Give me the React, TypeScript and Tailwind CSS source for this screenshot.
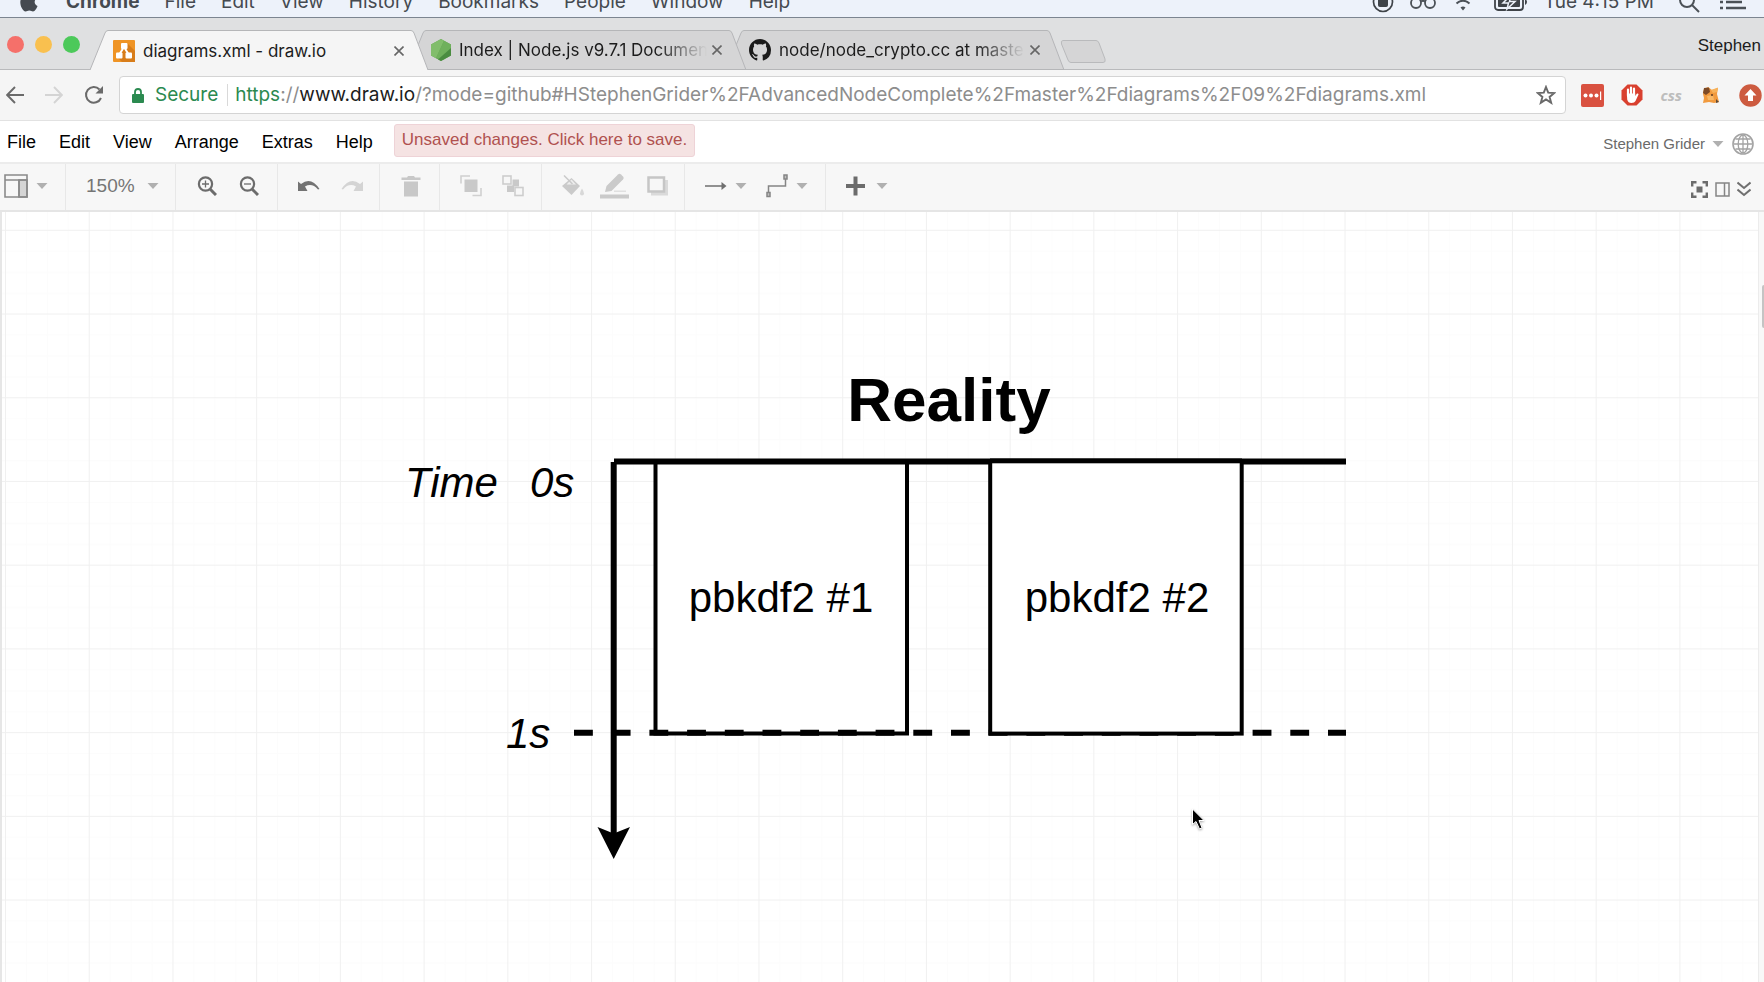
import type { ReactNode } from "react";

const MAC_MENUS = ["File", "Edit", "View", "History", "Bookmarks", "People", "Window", "Help"];
const APP_MENUS = ["File", "Edit", "View", "Arrange", "Extras", "Help"];

function Caret() {
  return (
    <svg className="h-[6px] w-3 shrink-0" viewBox="0 0 12 6" aria-hidden="true">
      <path d="M0.5 0H11.5L6 6Z" fill="#b0b0b0" />
    </svg>
  );
}

/* ---------- macOS menu bar ---------- */

function MacMenuBar() {
  return (
    <div className="flex h-[18px] shrink-0 flex-col justify-end overflow-hidden border-b border-[#7c8590] bg-[#edf2fa]">
      <div className="flex h-[30px] shrink-0 items-center gap-[25px] pl-5 pr-[18px] text-[19px] leading-5 text-[#454a50]">
        <svg className="mr-[3px] h-[22px] w-[18px]" viewBox="0 0 18 22" fill="#454a50" aria-hidden="true">
          <path d="M12.3 0.5C12.4 2.7 10.6 4.7 8.8 4.6C8.600 2.600 10.400 0.600 12.300 0.500ZM9 6C9.900 6 11 5 12.900 5.100C14.600 5.200 16 6 16.800 7.200C13.600 9.300 14.100 13.600 17.500 14.900C16.700 17.300 15 20.300 13 20.400C11.600 20.400 11.100 19.500 9.300 19.500C7.500 19.500 7 20.400 5.600 20.400C3 20.500 0.300 15.500 0.300 11.300C0.300 7.300 2.900 5.100 5.400 5.100C7 5.100 8.200 6 9 6Z" />
        </svg>
        <button className="font-bold">Chrome</button>
        {MAC_MENUS.map((m) => (
          <button key={m}>{m}</button>
        ))}
        <div className="ml-auto flex items-center gap-4">
          <svg className="h-[22px] w-[22px]" viewBox="0 0 22 22" fill="none" stroke="#3f4449" aria-hidden="true">
            <circle cx="11" cy="11" r="9.500" strokeWidth="1.700" />
            <rect x="6.500" y="6.500" width="9" height="9" rx="1" fill="#3f4449" />
          </svg>
          <svg className="h-[22px] w-[26px]" viewBox="0 0 26 22" fill="none" stroke="#4b5157" strokeWidth="1.800" aria-hidden="true">
            <circle cx="6" cy="12" r="5" />
            <circle cx="20" cy="12" r="5" />
            <path d="M11 10.500Q13 9 15 10.500" />
          </svg>
          <svg className="h-[20px] w-[22px]" viewBox="0 0 22 20" fill="none" stroke="#4b5157" strokeWidth="2" aria-hidden="true">
            <path d="M1 7Q11 -2 21 7M4.500 11.500Q11 6 17.500 11.500" />
            <path d="M8.500 15.500Q11 13.500 13.500 15.500L11 18.500Z" fill="#4b5157" stroke="none" />
          </svg>
          <svg className="ml-1 h-[18px] w-[34px]" viewBox="0 0 34 18" aria-hidden="true">
            <rect x="1" y="1" width="28" height="16" rx="3" fill="none" stroke="#3f4449" strokeWidth="1.800" />
            <rect x="4" y="4" width="22" height="10" rx="1" fill="#3f4449" />
            <path d="M17 2L9 10H14.500L13 16L21 8.500H15.500Z" fill="#3f4449" stroke="#edf2fa" strokeWidth="1.500" />
            <path d="M31 6V12Q33 11 33 9Q33 7 31 6Z" fill="#3f4449" />
          </svg>
          <span className="whitespace-nowrap">Tue 4:15 PM</span>
          <svg className="ml-2 h-[22px] w-[22px]" viewBox="0 0 22 22" fill="none" stroke="#4b5157" strokeWidth="2" aria-hidden="true">
            <circle cx="9" cy="9" r="7" />
            <path d="M14 14L21 21" />
          </svg>
          <svg className="ml-1 h-[16px] w-[26px]" viewBox="0 0 26 16" stroke="#4b5157" strokeWidth="2.500" aria-hidden="true">
            <path d="M0 2H3M6 2H22M0 8H3M6 8H22M0 14H3M6 14H26" />
          </svg>
        </div>
      </div>
    </div>
  );
}

/* ---------- Browser tabs ---------- */

function DrawIoIcon() {
  return (
    <svg className="h-[22px] w-[22px] shrink-0" viewBox="0 0 22 22" aria-hidden="true">
      <rect width="22" height="22" rx="1" fill="#ef9425" />
      <path d="M14 3L22 11V22H9L4 17Z" fill="#d87d1a" />
      <path d="M11 7L6 15M11 7L16 15" stroke="#fff" strokeWidth="2" />
      <rect x="8" y="3" width="6.500" height="6" rx="1" fill="#fff" />
      <rect x="3" y="12.500" width="6.500" height="6" rx="1" fill="#fff" />
      <rect x="12.500" y="12.500" width="6.500" height="6" rx="1" fill="#fff" />
    </svg>
  );
}

function NodeIcon() {
  return (
    <svg className="h-[22px] w-[20px] shrink-0" viewBox="0 0 20 22" aria-hidden="true">
      <path d="M10 0L20 5.500V16.500L10 22L0 16.500V5.500Z" fill="#63a553" />
      <path d="M10 0L13 1.700L5 19.200L0 16.500V5.500Z" fill="#81bd6b" />
      <path d="M13 1.700L20 5.500V11L13 20.400L5 19.200Z" fill="#6fb05c" />
      <path d="M20 9V16.500L10 22L7 20.400Z" fill="#4a8c40" />
    </svg>
  );
}

function GithubIcon() {
  return (
    <svg className="h-[22px] w-[22px] shrink-0" viewBox="0 0 16 16" fill="#1b1b1b" aria-hidden="true">
      <path d="M8 0C3.580 0 0 3.580 0 8c0 3.540 2.290 6.530 5.470 7.590.4.070.55-.17.55-.38 0-.19-.01-.82-.01-1.490-2.010.37-2.530-.49-2.690-.94-.09-.23-.48-.94-.82-1.130-.28-.15-.68-.52-.01-.53.63-.01 1.080.58 1.230.82.72 1.210 1.870.87 2.330.66.07-.52.28-.87.51-1.070-1.780-.2-3.640-.89-3.640-3.950 0-.87.31-1.590.82-2.150-.08-.2-.36-1.020.08-2.120 0 0 .67-.21 2.200.82.64-.18 1.320-.27 2-.27s1.360.09 2 .27c1.530-1.040 2.200-.82 2.200-.82.44 1.100.16 1.920.08 2.120.51.56.82 1.270.82 2.150 0 3.070-1.870 3.750-3.650 3.950.29.25.54.73.54 1.480 0 1.070-.01 1.930-.01 2.200 0 .21.15.46.55.38A8.010 8.010 0 0 0 16 8c0-4.420-3.580-8-8-8Z" />
    </svg>
  );
}

function Tab({ title, icon, active, layer }: { title: string; icon: ReactNode; active?: boolean; layer: string }) {
  const fill = active ? "#f5f5f5" : "#d5d5d6";
  return (
    <div className={`relative flex h-10 w-[338px] shrink-0 not-first:-ml-5 ${layer}`}>
      <svg className="h-10 w-[18px] shrink-0" viewBox="0 0 18 40" aria-hidden="true">
        <path d="M0 40L15 3Q16 0.500 18 0.500V40Z" fill={fill} />
        <path d="M0 40L15 3Q16 0.500 18 0.500" fill="none" stroke="#b5b6b8" />
      </svg>
      <div
        className={`flex min-w-0 flex-1 items-center border-t border-[#b5b6b8] pl-[5px] ${
          active ? "bg-[#f5f5f5]" : "border-b bg-[#d5d5d6]"
        }`}
      >
        {icon}
        <button
          className={`ml-2 flex-1 overflow-hidden whitespace-nowrap text-left text-[17px] leading-5 text-[#1c1c1c] ${
            active ? "" : "[mask-image:linear-gradient(to_right,black_80%,transparent)]"
          }`}
        >
          {title}
        </button>
        <button aria-label={`Close ${title}`} className="ml-[2px] mr-1 p-[3px]">
          <svg className="h-[10px] w-[10px]" viewBox="0 0 10 10" stroke="#666" strokeWidth="1.600" aria-hidden="true">
            <path d="M0.500 0.500L9.500 9.500M9.500 0.500L0.500 9.500" />
          </svg>
        </button>
      </div>
      <svg className="h-10 w-[17px] shrink-0" viewBox="0 0 17 40" aria-hidden="true">
        <path d="M0 0.500Q2 0.500 3 3L17 40H0Z" fill={fill} />
        <path d="M0 0.500Q2 0.500 3 3L17 40" fill="none" stroke="#b5b6b8" />
        {!active && <path d="M0 39.500H17" stroke="#b5b6b8" />}
      </svg>
    </div>
  );
}

function TabStrip() {
  return (
    <div className="flex h-[52px] shrink-0 items-end bg-[#dfe0e1] pr-[3px] shadow-[inset_0_-1px_0_#b9babc]">
      <div className="flex w-[90px] shrink-0 gap-[11px] self-center pl-[7px]">
        <button aria-label="Close window" className="h-[17px] w-[17px] rounded-full bg-[#f5706a]" />
        <button aria-label="Minimize window" className="h-[17px] w-[17px] rounded-full bg-[#f9c04f]" />
        <button aria-label="Zoom window" className="h-[17px] w-[17px] rounded-full bg-[#4cc95a]" />
      </div>
      <div className="isolate flex">
        <Tab title="diagrams.xml - draw.io" icon={<DrawIoIcon />} active layer="z-30" />
        <Tab title="Index | Node.js v9.7.1 Documentation" icon={<NodeIcon />} layer="z-20" />
        <Tab title="node/node_crypto.cc at master · nodejs" icon={<GithubIcon />} layer="z-10" />
      </div>
      <button aria-label="New tab" className="-ml-1 mb-[7px]">
        <svg className="h-[23px] w-[47px]" viewBox="0 0 47 23" aria-hidden="true">
          <path d="M3 0.500H36Q38 0.500 39 3L45 19Q46 22.500 43 22.500H11Q9 22.500 8 20L1.500 4Q0.500 0.500 3 0.500Z" fill="#d5d5d6" stroke="#b9babc" />
        </svg>
      </button>
      <button className="mb-[14px] ml-auto font-['Liberation_Sans',Arial,sans-serif] text-[17px] leading-5 text-[#1c1c1c]">
        Stephen
      </button>
    </div>
  );
}

/* ---------- Address bar ---------- */

function AddressBar() {
  return (
    <div className="flex h-[51px] shrink-0 items-center border-b border-[#e2e2e2] bg-[#f5f5f5] pl-[6px] pr-[2px]">
      <button aria-label="Back">
        <svg className="h-[18px] w-[18px]" viewBox="0 0 18 18" fill="none" stroke="#6a6a6a" strokeWidth="1.900" aria-hidden="true">
          <path d="M18 9H1.500M9 1L1.200 9L9 17" />
        </svg>
      </button>
      <button aria-label="Forward" className="ml-[21px]">
        <svg className="h-[18px] w-[18px]" viewBox="0 0 18 18" fill="none" stroke="#d4d4d4" strokeWidth="1.900" aria-hidden="true">
          <path d="M0 9H16.500M9 1L16.800 9L9 17" />
        </svg>
      </button>
      <button aria-label="Reload" className="ml-[21px]">
        <svg className="h-5 w-5" viewBox="0 0 20 20" fill="none" stroke="#6a6a6a" strokeWidth="2" aria-hidden="true">
          <path d="M17 13A7.800 7.800 0 1 1 15.500 4.500" />
          <path d="M19 1V8.500H11.500Z" fill="#6a6a6a" stroke="none" />
        </svg>
      </button>
      <div className="ml-[15px] flex h-[38px] min-w-0 flex-1 items-center rounded-[4px] border border-[#d4d4d4] bg-white pl-3 pr-[9px] text-[19px] leading-6">
        <svg className="h-[15px] w-3 shrink-0" viewBox="0 0 12 15" aria-hidden="true">
          <path d="M3 7V4Q3 1 6 1Q9 1 9 4V7" fill="none" stroke="#2b8a50" strokeWidth="1.800" />
          <rect y="6" width="12" height="9" rx="1" fill="#2b8a50" />
        </svg>
        <span className="ml-[11px] text-[#2b8a50]">Secure</span>
        <span className="ml-[9px] h-[22px] w-px shrink-0 bg-[#d9d9d9]" />
        <div
          role="textbox"
          aria-label="Address"
          contentEditable
          suppressContentEditableWarning
          className="ml-[7px] min-w-0 flex-1 overflow-hidden whitespace-nowrap text-[#8d8d8d] outline-none"
        >
          <span className="text-[#2b8a50]">https</span>://<span className="text-[#1c1c1c]">www.draw.io</span>
          /?mode=github#HStephenGrider%2FAdvancedNodeComplete%2Fmaster%2Fdiagrams%2F09%2Fdiagrams.xml
        </div>
        <button aria-label="Bookmark this page">
          <svg className="h-5 w-5" viewBox="0 0 20 20" fill="none" stroke="#6a6a6a" strokeWidth="1.900" aria-hidden="true">
            <path d="M10 2L12.200 7.700L18.300 8L13.600 11.900L15.200 17.800L10 14.500L4.800 17.800L6.400 11.900L1.700 8L7.800 7.700Z" />
          </svg>
        </button>
      </div>
      <div className="ml-[15px] flex shrink-0 items-center">
        <button aria-label="Password manager">
          <svg className="h-[23px] w-[23px]" viewBox="0 0 23 23" aria-hidden="true">
            <rect width="23" height="23" rx="2" fill="#d95140" />
            <g fill="#fff">
              <circle cx="4.500" cy="11.500" r="2" />
              <circle cx="10" cy="11.500" r="2" />
              <circle cx="15.500" cy="11.500" r="2" />
              <rect x="19" y="7.500" width="1.200" height="8.500" />
            </g>
          </svg>
        </button>
        <button aria-label="Ad blocker" className="ml-[17px]">
          <svg className="h-[22px] w-[22px]" viewBox="0 0 22 22" aria-hidden="true">
            <path d="M6.500 0.500H15.500L21.500 6.500V15.500L15.500 21.500H6.500L0.500 15.500V6.500Z" fill="#d9402f" />
            <path d="M7 12V5.500M10 11V3.500M13 11V4.500" stroke="#fff" strokeWidth="2.200" strokeLinecap="round" />
            <path d="M5.900 9.500H14.200V12L16 9.500Q17.500 9 17.500 10.500L14.500 17Q13.500 19 10.500 19Q7 19 6.200 15.500Z" fill="#fff" />
          </svg>
        </button>
        <button aria-label="CSS extension" className="ml-[17px] font-['Noto_Sans'] text-[15px] font-bold italic leading-5 text-[#bdbdbd]">
          css
        </button>
        <button aria-label="Fox extension" className="ml-5">
          <svg className="h-[18px] w-[18px]" viewBox="0 0 18 18" aria-hidden="true">
            <path d="M2 3L6 1L10 4L16 2L15 8L17 16L12 17L7 16L1 17L2 12L1 8Z" fill="#f19a3e" />
            <path d="M2 2L7 1.500L8 6L4 9L1 7Z" fill="#7d4a26" />
            <path d="M9 4L16 1.500L15 6L11 7Z" fill="#f7b25a" />
            <path d="M5 10L11 9L12 14L6 14Z" fill="#f8b866" />
            <circle cx="10" cy="9" r="1" fill="#5e3a20" />
            <path d="M14 13L17 16L14 17Z" fill="#5e4a3a" />
          </svg>
        </button>
        <button aria-label="Upload extension" className="ml-[19px]">
          <svg className="h-[23px] w-[23px]" viewBox="0 0 23 23" aria-hidden="true">
            <circle cx="11.500" cy="11.500" r="11.200" fill="#cd5b40" />
            <path d="M11.500 5L17.500 11.500H14V17H9V11.500H5.500Z" fill="#fff" />
          </svg>
        </button>
      </div>
    </div>
  );
}

/* ---------- Editor menu bar ---------- */

function AppMenuBar() {
  return (
    <div className="flex h-[43px] shrink-0 items-center border-b-2 border-[#ececec] bg-white pl-[7px] pr-[10px] font-['Liberation_Sans',Arial,sans-serif]">
      <nav className="flex gap-[23px] text-[18px] leading-6 text-black">
        {APP_MENUS.map((m) => (
          <button key={m}>{m}</button>
        ))}
      </nav>
      <button className="ml-[21px] mb-[3px] h-[33px] whitespace-nowrap rounded-[3px] border border-[#eed3d7] bg-[#f5e3e3] px-[7px] text-[17px] leading-5 text-[#b0514f]">
        Unsaved changes. Click here to save.
      </button>
      <button className="ml-auto mt-1 flex items-center gap-[7px] text-[15px] leading-5 text-[#6a6a6a]">
        Stephen Grider
        <Caret />
      </button>
      <button aria-label="Language" className="ml-2 mt-1">
        <svg className="h-[22px] w-[22px]" viewBox="0 0 22 22" fill="none" stroke="#a3a3a3" strokeWidth="1.300" aria-hidden="true">
          <circle cx="11" cy="11" r="10" strokeWidth="1.600" />
          <ellipse cx="11" cy="11" rx="4.800" ry="9" />
          <path d="M11 2V20M2 11H20M3.500 6H18.500M3.500 16H18.500" />
        </svg>
      </button>
    </div>
  );
}

/* ---------- Editor toolbar ---------- */

function Group({ width, last, children }: { width: string; last?: boolean; children: ReactNode }) {
  return (
    <div className={`flex h-full shrink-0 items-center pb-[2px] ${last ? "" : "border-r border-[#e8e8e8]"} ${width}`}>
      {children}
    </div>
  );
}

function Tool({ label, className = "", caret, children }: { label: string; className?: string; caret?: boolean; children: ReactNode }) {
  return (
    <button aria-label={label} className={`flex items-center ${caret ? "gap-2" : ""} ${className}`}>
      {children}
      {caret && <Caret />}
    </button>
  );
}

function Toolbar() {
  return (
    <div className="flex h-12 shrink-0 items-center border-b-2 border-[#e5e5e5] bg-[#f7f7f7] pr-[13px]">
      <Group width="w-[66px]">
        <Tool label="View panels" className="pl-1" caret>
          <svg className="h-6 w-6" viewBox="0 0 24 24" fill="none" stroke="#8a8a8a" strokeWidth="1.600" aria-hidden="true">
            <rect x="15" y="6" width="8" height="17" fill="#d5d5d5" />
            <path d="M1 1H23V23H1ZM1 6H23M15 6V23" />
          </svg>
        </Tool>
      </Group>
      <Group width="w-[110px]">
        <button className="flex items-center gap-3 pl-5 font-['Liberation_Sans',Arial,sans-serif] text-[19px] leading-6 text-[#757575]">
          150%
          <Caret />
        </button>
      </Group>
      <Group width="w-[102px]">
        <Tool label="Zoom in" className="ml-[21px]">
          <svg className="h-5 w-5" viewBox="0 0 20 20" fill="none" stroke="#6c6c6c" aria-hidden="true">
            <circle cx="8.500" cy="8" r="6.600" strokeWidth="2.200" />
            <path d="M13 13L19 19" strokeWidth="3" />
            <path d="M5 8H12M8.500 4.500V11.500" strokeWidth="1.300" />
          </svg>
        </Tool>
        <Tool label="Zoom out" className="ml-[22px]">
          <svg className="h-5 w-5" viewBox="0 0 20 20" fill="none" stroke="#6c6c6c" aria-hidden="true">
            <circle cx="8.500" cy="8" r="6.600" strokeWidth="2.200" />
            <path d="M13 13L19 19" strokeWidth="3" />
            <path d="M5 8H12" strokeWidth="1.300" />
          </svg>
        </Tool>
      </Group>
      <Group width="w-[102px]">
        <Tool label="Undo" className="ml-5">
          <svg className="h-3 w-[22px]" viewBox="0 0 22 12" fill="#737373" aria-hidden="true">
            <path d="M0 1.500L3 4Q13 -4 21.500 9L20 9.500Q14 2.500 7 6.500L9.500 11H0Z" />
          </svg>
        </Tool>
        <Tool label="Redo" className="ml-[21px]">
          <svg className="h-3 w-[22px]" viewBox="0 0 22 12" fill="#d4d4d4" aria-hidden="true">
            <path d="M22 1.500L19 4Q9 -4 0.500 9L2 9.500Q8 2.500 15 6.500L12.500 11H22Z" />
          </svg>
        </Tool>
      </Group>
      <Group width="w-[60px]">
        <Tool label="Delete" className="ml-[21px]">
          <svg className="h-[21px] w-[20px]" viewBox="0 0 20 21" fill="#c8c8c8" aria-hidden="true">
            <path d="M0.500 1.500H6L7 0H13L14 1.500H19.500V4H0.500ZM3 5.500H17V20.500H3Z" />
          </svg>
        </Tool>
      </Group>
      <Group width="w-[102px]">
        <Tool label="To front" className="ml-5">
          <svg className="h-[22px] w-[22px]" viewBox="0 0 22 22" fill="none" stroke="#d0d0d0" strokeWidth="1.600" aria-hidden="true">
            <path d="M1 8.500V1H10M21 13V20.500H12.500" />
            <rect x="4.500" y="4.500" width="13" height="12.500" fill="#c9c9c9" stroke="none" />
          </svg>
        </Tool>
        <Tool label="To back" className="ml-5">
          <svg className="h-[22px] w-[22px]" viewBox="0 0 22 22" fill="none" stroke="#cdcdcd" strokeWidth="1.600" aria-hidden="true">
            <path d="M10.500 4.500H17V11.500H12V17H5V10.500H10.500Z" fill="#c9c9c9" stroke="none" />
            <rect x="1" y="1" width="8" height="8" />
            <rect x="13" y="12.500" width="8" height="8" />
          </svg>
        </Tool>
      </Group>
      <Group width="w-[143px]">
        <Tool label="Fill color" className="ml-[19px]">
          <svg className="h-[22px] w-[24px]" viewBox="0 0 24 22" aria-hidden="true">
            <path d="M10.500 3L19 11L10.500 20L1 11Z" fill="#cacaca" />
            <path d="M5.500 9.500L10.500 4.500L15 9.500Z" fill="#ededed" />
            <path d="M3 0.500L11.500 9" stroke="#cacaca" strokeWidth="1.500" />
            <path d="M21 13.500Q25 20 21 20.500Q17 20 21 13.500Z" fill="#d8d8d8" />
          </svg>
        </Tool>
        <Tool label="Line color" className="ml-[15px]">
          <svg className="h-[26px] w-[29px]" viewBox="0 0 29 26" fill="#cacaca" aria-hidden="true">
            <path d="M5 19L6.500 13L18 1.500Q19.500 0 21 1.500L23 3.500Q24.500 5 23 6.500L11.500 18Z" />
            <rect x="14" y="17.500" width="12" height="1.500" fill="#e0e0e0" />
            <rect y="21.500" width="29" height="4" />
          </svg>
        </Tool>
        <Tool label="Shadow" className="ml-[18px]">
          <svg className="h-[20px] w-[21px]" viewBox="0 0 21 20" fill="none" aria-hidden="true">
            <path d="M18 4H21V19.500H4V16H18Z" fill="#dadada" />
            <rect x="1.500" y="1.500" width="15.500" height="14" stroke="#c6c6c6" strokeWidth="2.500" />
          </svg>
        </Tool>
      </Group>
      <Group width="w-[141px]">
        <Tool label="Connection" className="ml-5" caret>
          <svg className="h-2 w-[22px]" viewBox="0 0 22 8" aria-hidden="true">
            <path d="M0 4H18" stroke="#6f6f6f" strokeWidth="1.500" />
            <path d="M16.500 0L21.500 4L16.500 8Z" fill="#6f6f6f" />
          </svg>
        </Tool>
        <Tool label="Waypoints" className="ml-[19px]" caret>
          <svg className="h-[24px] w-[22px]" viewBox="0 0 22 24" fill="none" stroke="#858585" strokeWidth="1.500" aria-hidden="true">
            <path d="M2.500 18V12H19.500V5" />
            <rect x="1" y="18.500" width="3" height="4" fill="#c0c0c0" />
            <rect x="18" y="1" width="3" height="4" fill="#c0c0c0" />
          </svg>
        </Tool>
      </Group>
      <Group width="w-[80px]" last>
        <Tool label="Insert" className="ml-[20px] gap-[11px]">
          <svg className="h-5 w-[19px]" viewBox="0 0 19 20" stroke="#6c6c6c" strokeWidth="4" aria-hidden="true">
            <path d="M0 10H19M9.500 0.500V19.500" />
          </svg>
          <Caret />
        </Tool>
      </Group>
      <div className="ml-auto mt-1 flex items-center gap-[7px]">
        <button aria-label="Fullscreen">
          <svg className="h-[17px] w-[17px]" viewBox="0 0 17 17" fill="none" stroke="#6c6c6c" strokeWidth="2.400" aria-hidden="true">
            <path d="M1.200 5.500V1.200H5.500M11.500 1.200H15.800V5.500M15.800 11.500V15.800H11.500M5.500 15.800H1.200V11.500" />
            <rect x="5.500" y="5.500" width="6" height="6" fill="#6c6c6c" stroke="none" />
          </svg>
        </button>
        <button aria-label="Format panel">
          <svg className="h-[15px] w-[15px]" viewBox="0 0 15 15" fill="none" stroke="#858585" strokeWidth="1.500" aria-hidden="true">
            <path d="M1 1H14V14H1ZM9.500 1V14" />
          </svg>
        </button>
        <button aria-label="Collapse">
          <svg className="h-[16px] w-[14px]" viewBox="0 0 14 16" fill="none" stroke="#707070" strokeWidth="2" aria-hidden="true">
            <path d="M0.500 1.500L7 7L13.500 1.500M0.500 8.500L7 14L13.500 8.500" />
          </svg>
        </button>
      </div>
    </div>
  );
}

/* ---------- Canvas ---------- */

function Canvas() {
  return (
    <main className="flex min-h-[560px] flex-1 overflow-hidden border-l-2 border-[#e6e6e6] bg-white">
      <svg
        className="h-full min-w-0 flex-1 font-['Liberation_Sans',Arial,sans-serif]"
        role="img"
        aria-label="Timeline diagram"
        fill="none"
        stroke="#000"
      >
        <defs>
          <pattern id="grid" x="3" y="17.800" width="83.720" height="83.720" patternUnits="userSpaceOnUse">
            <path d="M21.500 0V84M42.500 0V84M63.500 0V84M0 21.500H84M0 42.500H84M0 63.500H84" stroke="#fcfcfc" />
            <path d="M0.500 0V84M0 0.500H84" stroke="#f0f0f0" />
          </pattern>
        </defs>
        <rect width="100%" height="100%" fill="url(#grid)" stroke="none" />

        <rect x="653.500" y="250" width="251.500" height="271.500" fill="#fff" strokeWidth="4" />
        <path d="M612 249.500H1344" strokeWidth="6" />
        <path d="M572 520.800H1344" strokeWidth="6" strokeDasharray="18.850 18.850" />
        <path d="M611.700 250V624" strokeWidth="6" />
        <path d="M611.700 647L595.500 615L611.700 621.500L628 615Z" fill="#000" stroke="none" />
        <rect x="988.200" y="249.300" width="251.500" height="272.300" fill="#fff" strokeWidth="4" />
        <path d="M988 248.500H1240" strokeWidth="4" />

        <g fill="#000" stroke="none">
          <text x="947" y="209" fontSize="62" fontWeight="700" textAnchor="middle">Reality</text>
          <g fontSize="42" fontStyle="italic">
            <text x="403" y="285">Time</text>
            <text x="528" y="285">0s</text>
            <text x="504" y="536">1s</text>
          </g>
          <g fontSize="42" textAnchor="middle">
            <text x="779" y="400">pbkdf2 #1</text>
            <text x="1115" y="400">pbkdf2 #2</text>
          </g>
        </g>

        <path
          d="M1190.500 597V612.500L1194 609.500L1197.500 617L1200 615.800L1197 608.500H1202Z"
          fill="#000"
          stroke="#fff"
          strokeWidth="1"
          className="drop-shadow-[0_1px_1px_rgba(0,0,0,0.35)]"
        />
      </svg>
      <div className="flex w-[6px] shrink-0 justify-end border-l border-[#ececec] bg-[#f8f8f8] pt-[73px]">
        <div className="h-[43px] w-[2px] rounded-l-[2px] bg-[#c4c4c4]" />
      </div>
    </main>
  );
}

export default function App() {
  return (
    <div className="flex h-screen flex-col overflow-hidden bg-white font-[Inter,Roboto,sans-serif]">
      <MacMenuBar />
      <TabStrip />
      <AddressBar />
      <AppMenuBar />
      <Toolbar />
      <Canvas />
    </div>
  );
}
